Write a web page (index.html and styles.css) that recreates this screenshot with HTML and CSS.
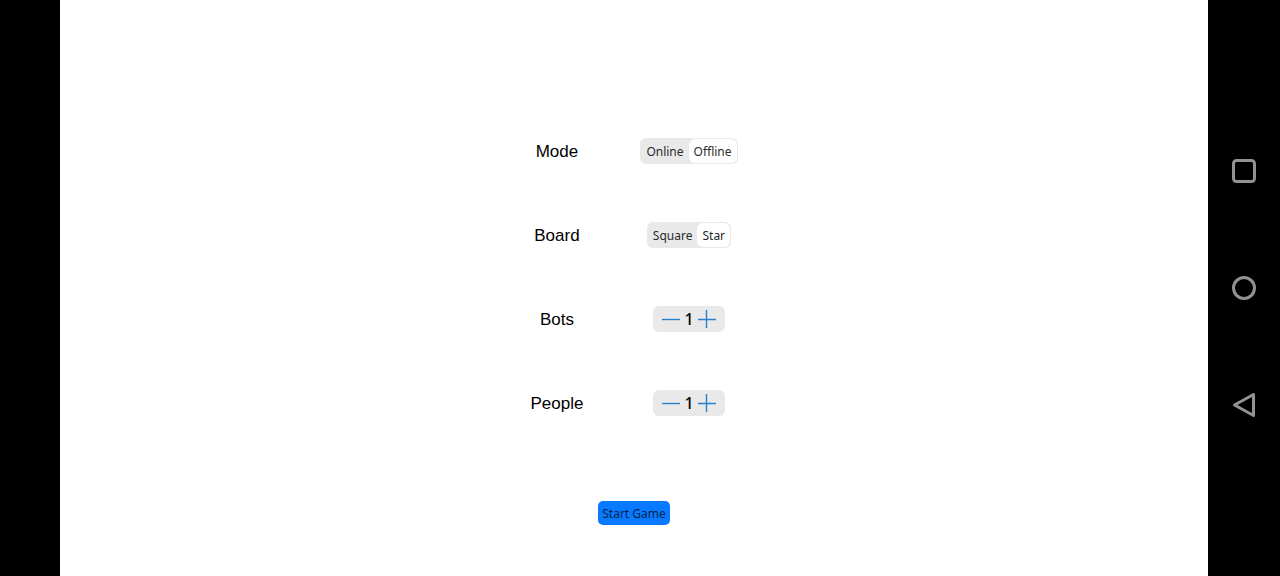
FILE: index.html
```html
<!DOCTYPE html>
<html lang="en">
<head>
<meta charset="utf-8">
<title>New Game</title>
<link rel="stylesheet" href="styles.css">
</head>
<body>
<main class="screen">
  <form class="setup">
    <div class="options">
      <span class="label" id="mode">Mode</span>
      <div class="segmented" role="radiogroup" aria-labelledby="mode">
        <label class="segment"><input type="radio" name="mode" value="online"><span>Online</span></label>
        <label class="segment"><input type="radio" name="mode" value="offline" checked><span>Offline</span></label>
      </div>
      <span class="label" id="board">Board</span>
      <div class="segmented" role="radiogroup" aria-labelledby="board">
        <label class="segment"><input type="radio" name="board" value="square"><span>Square</span></label>
        <label class="segment"><input type="radio" name="board" value="star" checked><span>Star</span></label>
      </div>
      <span class="label" id="bots">Bots</span>
      <div class="stepper" role="group" aria-labelledby="bots">
        <button type="button" class="step" aria-label="Fewer bots"><svg viewBox="0 0 18 18"><path d="M0 9.5H18"/></svg></button>
        <output class="count">1</output>
        <button type="button" class="step" aria-label="More bots"><svg viewBox="0 0 18 18"><path d="M0 9.5H18M8.5 0V18"/></svg></button>
      </div>
      <span class="label" id="people">People</span>
      <div class="stepper" role="group" aria-labelledby="people">
        <button type="button" class="step" aria-label="Fewer people"><svg viewBox="0 0 18 18"><path d="M0 9.5H18"/></svg></button>
        <output class="count">1</output>
        <button type="button" class="step" aria-label="More people"><svg viewBox="0 0 18 18"><path d="M0 9.5H18M8.5 0V18"/></svg></button>
      </div>
    </div>
    <button type="submit" class="start">Start Game</button>
  </form>
</main>
<nav class="system" aria-label="System navigation">
  <button type="button" class="key" aria-label="Recent apps"><svg viewBox="0 0 26 26"><rect x="2.5" y="2.5" width="21" height="21" rx="3"/></svg></button>
  <button type="button" class="key" aria-label="Home"><svg viewBox="0 0 26 26"><circle cx="13" cy="13" r="10.5"/></svg></button>
  <button type="button" class="key" aria-label="Back"><svg viewBox="0 0 26 26"><path d="M3.5 13 22.5 2.5V23.5Z"/></svg></button>
</nav>
</body>
</html>
```
FILE: styles.css
```css
* {
  box-sizing: border-box;
}

body {
  margin: 0;
  min-height: 100vh;
  display: flex;
  background: #000;
  color: #000;
  font-family: "Liberation Sans", Arial, sans-serif;
}

button {
  border: 0;
  padding: 0;
  background: none;
  cursor: pointer;
}

svg {
  display: block;
  fill: none;
}

.screen {
  flex: 1;
  margin-left: 60px;
  padding: 138px 16px 48px;
  background: #fff;
}

.setup {
  display: flex;
  flex-direction: column;
  align-items: center;
  gap: 85px;
}

.options {
  display: grid;
  grid-template-columns: auto auto;
  gap: 58px 57px;
  place-items: center;
}

.label {
  padding-top: 2px;
  font-size: 17px;
  line-height: 24px;
}

.segmented,
.stepper {
  display: flex;
  align-items: center;
  height: 26px;
  border-radius: 6px;
  background: #e9e9e9;
}

.segmented {
  padding: 1px;
}

.segment {
  position: relative;
  cursor: pointer;
}

.segment input {
  position: absolute;
  inset: 0;
  margin: 0;
  opacity: 0;
}

.segment span {
  display: block;
  padding: 2px 5px 0;
  border-radius: 6px;
  color: #2a2a2a;
  font: 12px/22px "Noto Sans", sans-serif;
}

.segment input:checked + span {
  background: #fff;
}

.stepper {
  padding: 0 9px;
  gap: 4px;
}

.step {
  width: 18px;
  height: 18px;
}

.step svg {
  width: 18px;
  height: 18px;
  stroke: #2a80cc;
  stroke-width: 1.4;
}

.count {
  width: 10px;
  text-align: center;
  font: 500 16px/26px "Noto Sans", sans-serif;
}

.start {
  padding: 2px 4px 0;
  border-radius: 5px;
  background: #087aff;
  color: #06234f;
  font: 12px/22px "Noto Sans", sans-serif;
}

.system {
  width: 72px;
  display: flex;
  flex-direction: column;
  align-items: center;
  justify-content: center;
  gap: 91px;
}

.key {
  width: 26px;
  height: 26px;
}

.key svg {
  stroke: #929292;
  stroke-width: 3;
  stroke-linejoin: round;
}
```
